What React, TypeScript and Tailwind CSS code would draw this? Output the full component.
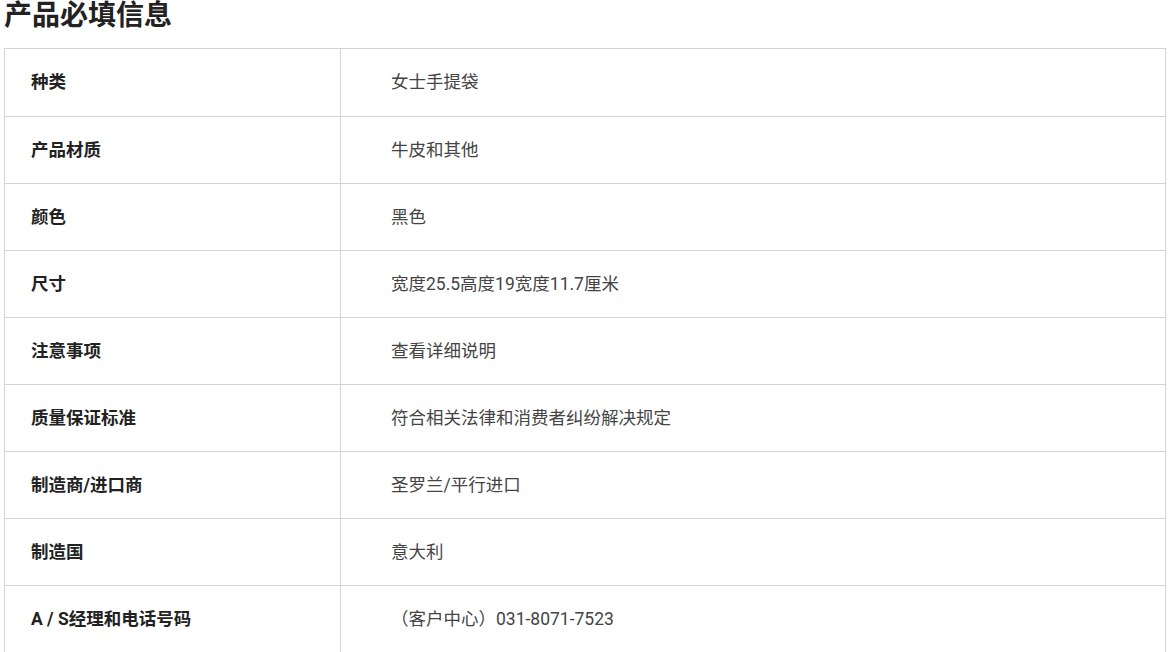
const rows: [string, string][] = [
  ['种类', '女士手提袋'],
  ['产品材质', '牛皮和其他'],
  ['颜色', '黑色'],
  ['尺寸', '宽度25.5高度19宽度11.7厘米'],
  ['注意事项', '查看详细说明'],
  ['质量保证标准', '符合相关法律和消费者纠纷解决规定'],
  ['制造商/进口商', '圣罗兰/平行进口'],
  ['制造国', '意大利'],
  ['A / S经理和电话号码', '（客户中心）031-8071-7523'],
];

export default function App() {
  return (
    <div
      className="bg-white w-[1169px] h-[652px] px-[4px] text-[#333]"
      style={{ fontFamily: 'Roboto, "Noto Sans CJK SC", sans-serif' }}
    >
      <h2 className="text-[28px] font-bold leading-[31px] h-[48px] text-[#222]">产品必填信息</h2>
      <div className="w-[1162px] border border-[#d4d4d4]">
        {rows.map(([label, value], i) => (
          <div
            key={label}
            className={`flex h-[67px] ${i > 0 ? 'border-t border-[#d4d4d4]' : ''}`}
          >
            <div className="w-[336px] shrink-0 border-r border-[#d4d4d4] flex items-center pl-[26px] text-[17.5px] font-bold text-[#222]">
              {label}
            </div>
            <div className="flex items-center pl-[50px] text-[17.5px] text-[#444]">{value}</div>
          </div>
        ))}
      </div>
    </div>
  );
}
